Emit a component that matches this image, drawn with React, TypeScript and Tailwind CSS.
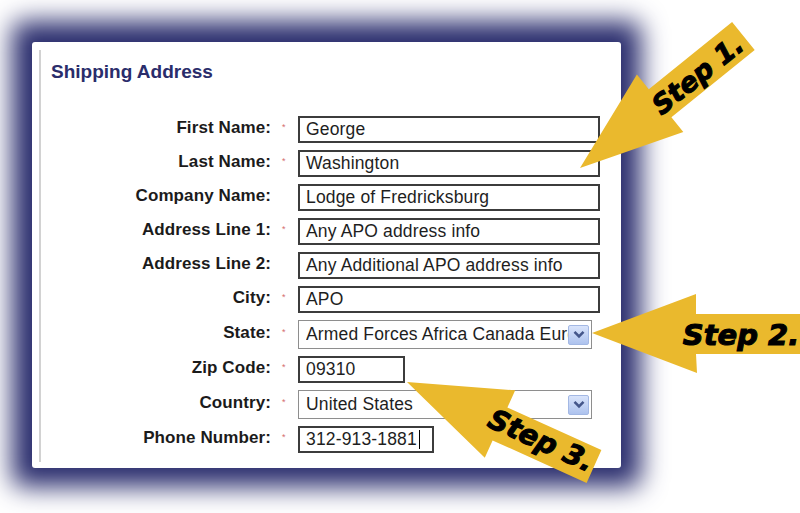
import React from "react";

type Row = {
  label: string;
  required: boolean;
  kind: "text" | "select";
  value: string;
  width: string;
  caret?: boolean;
};

const rows: Row[] = [
  { label: "First Name:", required: true, kind: "text", value: "George", width: "w-[302px]" },
  { label: "Last Name:", required: true, kind: "text", value: "Washington", width: "w-[302px]" },
  { label: "Company Name:", required: false, kind: "text", value: "Lodge of Fredricksburg", width: "w-[302px]" },
  { label: "Address Line 1:", required: true, kind: "text", value: "Any APO address info", width: "w-[302px]" },
  { label: "Address Line 2:", required: false, kind: "text", value: "Any Additional APO address info", width: "w-[302px]" },
  { label: "City:", required: true, kind: "text", value: "APO", width: "w-[302px]" },
  { label: "State:", required: true, kind: "select", value: "Armed Forces Africa Canada Europe Middle East", width: "w-[294px]" },
  { label: "Zip Code:", required: true, kind: "text", value: "09310", width: "w-[107px]" },
  { label: "Country:", required: true, kind: "select", value: "United States", width: "w-[294px]" },
  { label: "Phone Number:", required: true, kind: "text", value: "312-913-1881", width: "w-[136px]", caret: true },
];

const TextBox = ({ row }: { row: Row }) => (
  <div className={`${row.width} h-[27px] border-2 border-[#3c3c3c] bg-white flex items-center pl-[6px] text-[17.5px] tracking-[0.15px] text-[#1e1e1e] whitespace-nowrap overflow-hidden`}>
    <span>{row.value}</span>
    {row.caret && <span className="ml-[2px] w-[1px] h-[19px] bg-black" />}
  </div>
);

const SelectBox = ({ row }: { row: Row }) => (
  <div className={`${row.width} h-[29px] border border-[#8e8e8e] bg-white flex items-center pl-[7px] pr-[2px]`}>
    <span className="flex-1 overflow-hidden whitespace-nowrap text-[17.5px] tracking-[0.15px] text-[#1e1e1e]">{row.value}</span>
    <div className="w-[21px] h-[20px] shrink-0 rounded-[2px] border border-[#a3b8e4] bg-gradient-to-b from-[#d9e4fb] to-[#aec3ee] flex items-center justify-center">
      <svg width="12" height="9" viewBox="0 0 12 9">
        <path d="M1.5 1.8 L6 6.3 L10.5 1.8" fill="none" stroke="#44568a" strokeWidth="2.6" />
      </svg>
    </div>
  </div>
);

const StepArrows = () => (
  <svg className="absolute inset-0 pointer-events-none" width="800" height="513" viewBox="0 0 800 513">
    <g fill="#eab92d">
      <polygon points="580,168 683.3,132.1 671.4,117.3 754.7,50.1 732.1,22.1 648.8,89.3 636.9,74.5" />
      <polygon points="592,333 696,294 696,314 805,314 805,354 696,354 697,373" />
      <polygon points="407,382 515.2,390.3 507.4,407.6 601.4,450.1 586.6,482.9 492.6,440.4 484.8,457.7" />
    </g>
    <g fill="#000" stroke="#000" strokeWidth="1.1" fontFamily="'DejaVu Sans', sans-serif" fontWeight="bold" fontStyle="italic" textAnchor="middle">
      <text x="698" y="84" fontSize="27" transform="rotate(-38.9 698 75)">Step 1.</text>
      <text x="741" y="345" fontSize="29">Step 2.</text>
      <text x="541" y="450" fontSize="28" transform="rotate(24.3 541 441)">Step 3.</text>
    </g>
  </svg>
);

export default function App() {
  return (
    <div className="relative w-[800px] h-[513px] overflow-hidden bg-white font-['Liberation_Sans',Arial,sans-serif]">
      <div className="pl-[32px] pt-[42px]">
        <div className="w-[589px] h-[426px] rounded-[3px] bg-white shadow-[0_-1px_26px_20px_#2b2e6e] pt-[8px] pl-[7px] pb-[6px]">
          <div className="h-full border-l-2 border-[#d2d2d2]">
            <h2 className="pl-[10px] pt-[12px] text-[19px] leading-none font-bold text-[#2a2d6b]">Shipping Address</h2>
            <div className="mt-[35px] flex flex-col gap-[7px]">
              {rows.map((row) => (
                <div key={row.label} className="flex items-center">
                  <span className="w-[230px] pb-[4px] text-right text-[17px] tracking-[0.1px] leading-none font-bold text-[#1b1b1b]">
                    {row.label}
                  </span>
                  <span className="w-[27px] pl-[11px] pb-[4px] text-[9px] leading-none text-[#d46d6d]">
                    {row.required ? "*" : ""}
                  </span>
                  {row.kind === "text" ? <TextBox row={row} /> : <SelectBox row={row} />}
                </div>
              ))}
            </div>
          </div>
        </div>
      </div>
      <StepArrows />
    </div>
  );
}
